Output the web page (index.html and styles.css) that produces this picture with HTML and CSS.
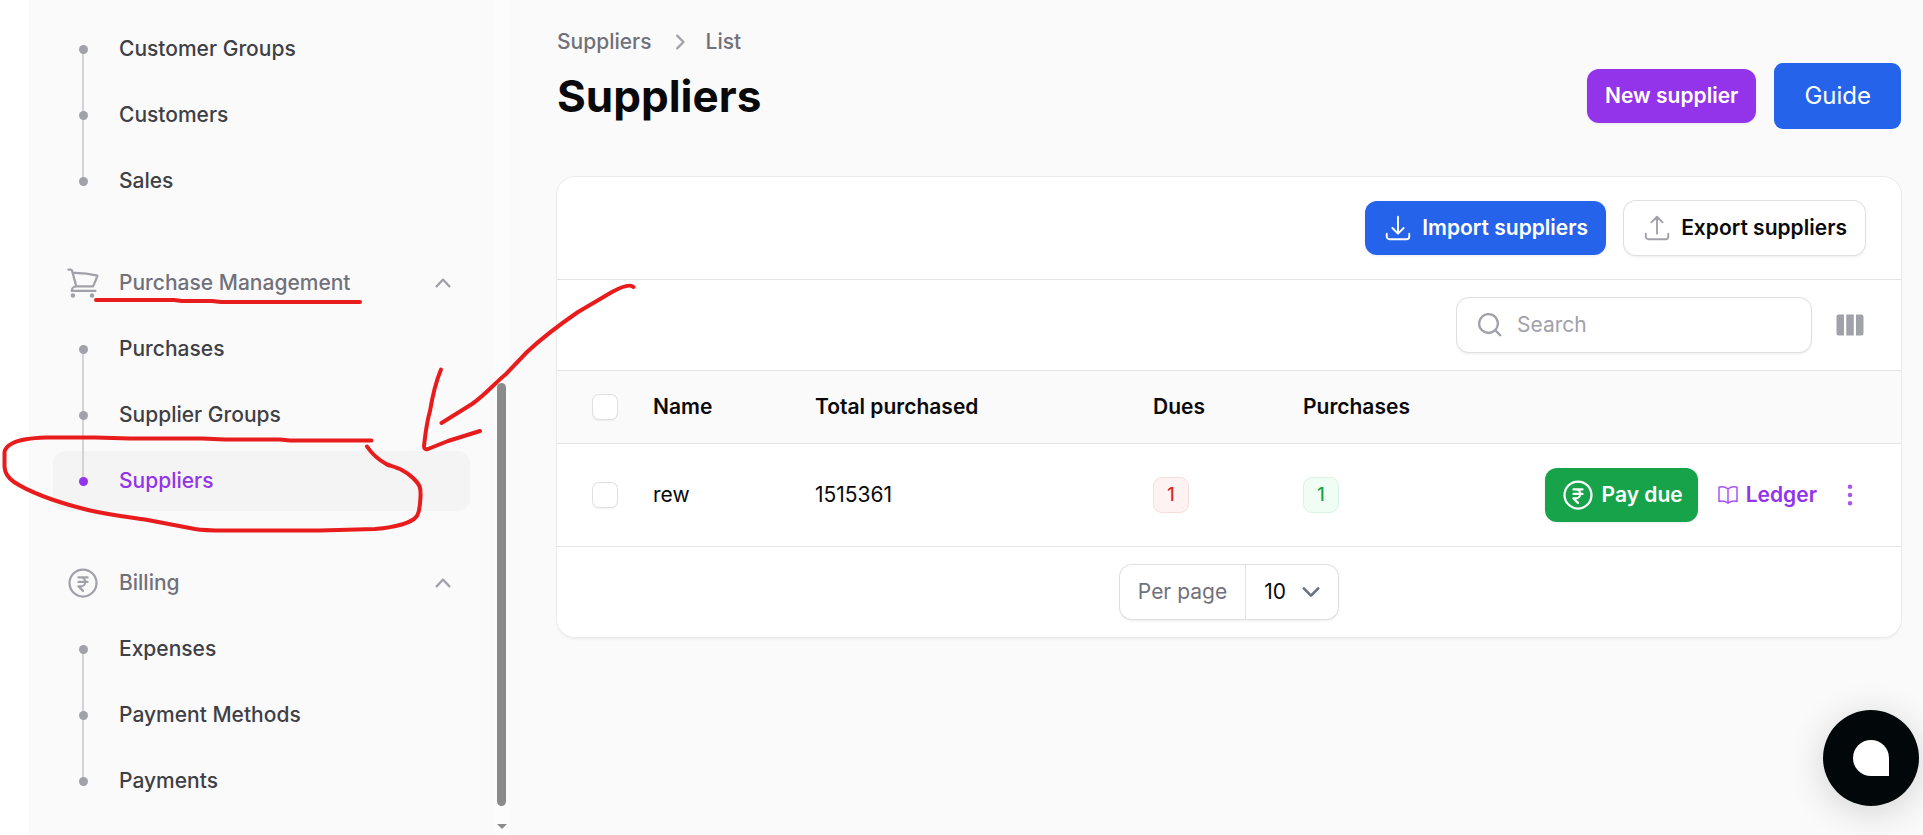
FILE: index.html
```html
<!DOCTYPE html>
<html lang="en">
<head>
<meta charset="utf-8">
<title>Suppliers</title>
<meta name="viewport" content="width=device-width, initial-scale=1">
<link rel="stylesheet" href="styles.css">
</head>
<body>
<svg class="sprite" aria-hidden="true">
  <symbol id="rupee" viewBox="0 0 24 24"><path d="M15 8.25H9m6 3H9m3 6-3-3h1.5a3 3 0 1 0 0-6M21 12a9 9 0 1 1-18 0 9 9 0 0 1 18 0Z"/></symbol>
  <symbol id="chevron-up" viewBox="0 0 20 20"><path d="M14.77 12.79a.75.75 0 0 1-1.06-.02L10 8.832 6.29 12.77a.75.75 0 1 1-1.08-1.04l4.25-4.5a.75.75 0 0 1 1.08 0l4.25 4.5a.75.75 0 0 1-.02 1.06Z"/></symbol>
</svg>

<div class="app">
  <aside class="sidebar">
    <nav class="nav" aria-label="Main">
      <section class="group">
        <ul class="items">
          <li><a class="item" href="#"><span class="marker"></span>Customer Groups</a></li>
          <li><a class="item" href="#"><span class="marker"></span>Customers</a></li>
          <li><a class="item" href="#"><span class="marker"></span>Sales</a></li>
        </ul>
      </section>
      <section class="group">
        <button class="group-head" type="button" aria-expanded="true">
          <svg class="icon-lg line" viewBox="0 0 24 24"><path d="M2.25 3h1.386c.51 0 .955.343 1.087.835l.383 1.437M7.5 14.25a3 3 0 0 0-3 3h15.75m-12.75-3h11.218c1.121-2.3 2.1-4.684 2.924-7.138a60.114 60.114 0 0 0-16.536-1.84M7.5 14.25 5.106 5.272M6 20.25a.75.75 0 1 1-1.5 0 .75.75 0 0 1 1.5 0Zm12.75 0a.75.75 0 1 1-1.5 0 .75.75 0 0 1 1.5 0Z"/></svg>
          <span class="group-label">Purchase Management</span>
          <svg class="icon-md solid"><use href="#chevron-up"/></svg>
        </button>
        <ul class="items">
          <li><a class="item" href="#"><span class="marker"></span>Purchases</a></li>
          <li><a class="item" href="#"><span class="marker"></span>Supplier Groups</a></li>
          <li><a class="item active" href="#" aria-current="page"><span class="marker"></span>Suppliers</a></li>
        </ul>
      </section>
      <section class="group">
        <button class="group-head" type="button" aria-expanded="true">
          <svg class="icon-lg line"><use href="#rupee"/></svg>
          <span class="group-label">Billing</span>
          <svg class="icon-md solid"><use href="#chevron-up"/></svg>
        </button>
        <ul class="items">
          <li><a class="item" href="#"><span class="marker"></span>Expenses</a></li>
          <li><a class="item" href="#"><span class="marker"></span>Payment Methods</a></li>
          <li><a class="item" href="#"><span class="marker"></span>Payments</a></li>
        </ul>
      </section>
    </nav>
    <div class="scrollbar" aria-hidden="true">
      <div class="thumb"></div>
      <div class="scroll-arrow"></div>
    </div>
  </aside>

  <main class="main">
    <header class="page-head">
      <div class="titles">
        <nav class="crumbs" aria-label="Breadcrumb">
          <a href="#">Suppliers</a>
          <svg class="icon-md solid" viewBox="0 0 20 20"><path d="M8.22 5.22a.75.75 0 0 1 1.06 0l4.25 4.25a.75.75 0 0 1 0 1.06l-4.25 4.25a.75.75 0 0 1-1.06-1.06L11.94 10 8.22 6.28a.75.75 0 0 1 0-1.06Z"/></svg>
          <span>List</span>
        </nav>
        <h1>Suppliers</h1>
      </div>
      <div class="page-actions">
        <a class="btn purple" href="#">New supplier</a>
        <a class="guide" href="#">Guide</a>
      </div>
    </header>

    <section class="card">
      <div class="toolbar">
        <button class="btn blue" type="button">
          <svg class="icon-md line" viewBox="0 0 24 24"><path d="M3 16.5v2.25A2.25 2.25 0 0 0 5.25 21h13.5A2.25 2.25 0 0 0 21 18.75V16.5M16.5 12 12 16.5m0 0L7.5 12m4.5 4.5V3"/></svg>
          Import suppliers
        </button>
        <button class="btn outline" type="button">
          <svg class="icon-md line" viewBox="0 0 24 24"><path d="M3 16.5v2.25A2.25 2.25 0 0 0 5.25 21h13.5A2.25 2.25 0 0 0 21 18.75V16.5m-13.5-9L12 3m0 0 4.5 4.5M12 3v13.5"/></svg>
          Export suppliers
        </button>
      </div>
      <div class="filters">
        <label class="search">
          <svg class="icon-md solid" viewBox="0 0 20 20"><path d="M9 3.5a5.5 5.5 0 1 0 0 11 5.5 5.5 0 0 0 0-11ZM2 9a7 7 0 1 1 12.452 4.391l3.328 3.329-1.06 1.06-3.329-3.328A7 7 0 0 1 2 9Z"/></svg>
          <input type="search" placeholder="Search" aria-label="Search">
        </label>
        <button class="icon-btn" type="button" aria-label="Toggle columns">
          <svg class="icon-md solid" viewBox="0 0 20 20"><path d="M14 17h3.5A1.5 1.5 0 0 0 19 15.5v-11A1.5 1.5 0 0 0 17.5 3H14v14ZM12.5 3h-5v14h5V3ZM2.5 3H6v14H2.5A1.5 1.5 0 0 1 1 15.5v-11A1.5 1.5 0 0 1 2.5 3Z"/></svg>
        </button>
      </div>
      <table class="table">
        <colgroup><col class="c-check"><col class="c-name"><col class="c-total"><col class="c-count"><col class="c-count"><col></colgroup>
        <thead>
          <tr>
            <th class="check"><input type="checkbox" aria-label="Select all"></th>
            <th>Name</th><th>Total purchased</th><th>Dues</th><th>Purchases</th><th></th>
          </tr>
        </thead>
        <tbody>
          <tr>
            <td class="check"><input type="checkbox" aria-label="Select rew"></td>
            <td>rew</td>
            <td>1515361</td>
            <td><span class="badge red">1</span></td>
            <td><span class="badge green">1</span></td>
            <td>
              <div class="row-actions">
                <button class="btn pay" type="button"><svg class="icon-lg line"><use href="#rupee"/></svg>Pay due</button>
                <a class="ledger" href="#"><svg class="icon-sm line" viewBox="0 0 24 24"><path d="M12 6.042A8.967 8.967 0 0 0 6 3.75c-1.052 0-2.062.18-3 .512v14.25A8.987 8.987 0 0 1 6 18c2.305 0 4.408.867 6 2.292m0-14.25a8.966 8.966 0 0 1 6-2.292c1.052 0 2.062.18 3 .512v14.25A8.987 8.987 0 0 0 18 18a8.967 8.967 0 0 0-6 2.292m0-14.25v14.25"/></svg>Ledger</a>
                <button class="icon-btn more" type="button" aria-label="More actions"><svg class="icon-md solid" viewBox="0 0 20 20"><path d="M10 3a1.5 1.5 0 1 0 0 3 1.5 1.5 0 0 0 0-3ZM10 8.5a1.5 1.5 0 1 0 0 3 1.5 1.5 0 0 0 0-3ZM11.5 15.5a1.5 1.5 0 1 0-3 0 1.5 1.5 0 0 0 3 0Z"/></svg></button>
              </div>
            </td>
          </tr>
        </tbody>
      </table>
      <div class="pager">
        <div class="per-page">
          <label for="per-page">Per page</label>
          <div class="select">
            <select id="per-page"><option>5</option><option selected>10</option><option>25</option><option>50</option></select>
            <svg class="caret" viewBox="0 0 20 20"><path d="m6 8 4 4 4-4"/></svg>
          </div>
        </div>
      </div>
    </section>
  </main>
</div>

<button class="chat" type="button" aria-label="Open chat"><span></span></button>

<svg class="notes" aria-hidden="true">
  <path d="M96 300H174L182 301H212L221 302H360"/>
  <path d="M371.500 440.500H290L280 439.500H225L202 438.500H130L95 437.500H46C30 438 19 440 13 443C7 446 5 449 4.500 452V467C5 473 8 478 14 482C34 495 64 504 88 510C110 515 128 517 145 519.500L195 529C204 530.500 212 530.500 225 530.500H320L375 529C398 527 412 522 416 517C420 513 420 504 420.500 497C421 487 420 485 413 478C403 469 397 468 387 464.500C377 459 372 454 367 446.500"/>
  <path d="M441.500 423L472 404C485 395 494 384 506 374L527 352C543 337 562 323 578 312L612 292C621 287 630 284 633.500 287"/>
  <path d="M441 369.500C435 384 432 399 430 411C426 425 425 438 424 446Q424 450 428 449L448 441L480 431"/>
</svg>
</body>
</html>
```
FILE: styles.css
```css
* { box-sizing: border-box; }

body {
  margin: 0;
  background: #fff;
  color: #09090b;
  font: 400 21px/30px Inter, "Liberation Sans", sans-serif;
  overflow: hidden;
}

a { color: inherit; text-decoration: none; }
button, input, select { font: inherit; color: inherit; }
button { border: 0; background: none; padding: 0; cursor: pointer; }
ul { list-style: none; margin: 0; padding: 0; }

.sprite { display: none; }
.icon-sm, .icon-md, .icon-lg { display: block; flex: none; }
.icon-sm { width: 24px; height: 24px; }
.icon-md { width: 30px; height: 30px; }
.icon-lg { width: 36px; height: 36px; }
.line { fill: none; stroke: currentColor; stroke-width: 1.5; stroke-linecap: round; stroke-linejoin: round; }
.solid { fill: currentColor; }

.app {
  display: flex;
  min-height: 100vh;
  padding-left: 29px;
}

/* Sidebar */
.sidebar {
  display: flex;
  flex: none;
  background: #fafafa;
}
.nav {
  width: 465px;
  padding: 19px 24px 0;
  display: flex;
  flex-direction: column;
  gap: 42px;
}
.group, .items {
  display: flex;
  flex-direction: column;
  gap: 6px;
}
.item, .group-head {
  display: flex;
  align-items: center;
  gap: 18px;
  width: 100%;
  padding: 12px;
  border-radius: 12px;
  font-weight: 500;
  color: #3f3f46;
}
.group-head { color: #71717a; text-align: left; }
.group-head svg { color: #a1a1aa; }
.group-label { flex: 1; }
.item.active { background: #f4f4f5; color: #9333ea; }

.marker {
  position: relative;
  width: 36px;
  height: 36px;
}
.marker::before, .marker::after {
  content: "";
  position: absolute;
  left: 50%;
}
.marker::before {
  top: -48px;
  height: 66px;
  width: 2px;
  margin-left: -1px;
  background: #d4d4d8;
}
.items li:first-child .marker::before { display: none; }
.marker::after {
  z-index: 1;
  top: 50%;
  width: 9px;
  height: 9px;
  margin: -4px;
  border-radius: 50%;
  background: #a1a1aa;
}
.item.active .marker::after { background: #9333ea; }

.scrollbar {
  width: 15px;
  padding: 383px 3px 6px;
  display: flex;
  flex-direction: column;
  gap: 18px;
  background: #fcfcfc;
}
.thumb { flex: 1; border-radius: 5px; background: #8b8b8b; }
.scroll-arrow {
  border: 5px solid transparent;
  border-top-color: #8b8b8b;
  border-bottom: 0;
  width: 10px;
}

/* Page */
.main {
  flex: 1;
  min-width: 0;
  padding: 27px 22px 48px 48px;
  background: #fafafa;
  display: flex;
  flex-direction: column;
  gap: 48px;
}
.page-head { display: flex; justify-content: space-between; align-items: flex-start; }
.titles { display: flex; flex-direction: column; gap: 12px; }
.crumbs { display: flex; gap: 12px; font-weight: 500; color: #71717a; }
.crumbs svg { color: #a1a1aa; }
h1 { margin: 0; font-size: 44px; line-height: 54px; font-weight: 700; }
.page-actions { display: flex; align-items: center; gap: 18px; padding-top: 36px; }

.btn {
  display: flex;
  align-items: center;
  gap: 9px;
  padding: 12px 18px;
  border-radius: 12px;
  font-weight: 600;
  color: #fff;
  box-shadow: 0 1px 3px rgba(0, 0, 0, .08);
}
.purple { background: #9333ea; }
.blue { background: #2563eb; }
.outline { color: #09090b; background: #fff; box-shadow: 0 0 0 1px #dfdfe1, 0 2px 3px rgba(0, 0, 0, .08); }
.outline svg { color: #a1a1aa; }
.guide {
  padding: 15px 30px;
  border-radius: 9px;
  font-size: 24px;
  line-height: 36px;
  color: #fff;
  background: #2563eb;
}

/* Card */
.card {
  border-radius: 18px;
  background: #fff;
  box-shadow: 0 0 0 1px #ebebec, 0 2px 3px rgba(0, 0, 0, .06);
}
.toolbar { display: flex; justify-content: flex-end; gap: 18px; padding: 24px 36px; }
.filters {
  display: flex;
  justify-content: flex-end;
  align-items: center;
  gap: 24px;
  padding: 18px 36px;
  border-top: 1px solid #e4e4e7;
}
.search {
  display: flex;
  align-items: center;
  gap: 12px;
  width: 354px;
  padding: 12px 18px;
  border-radius: 12px;
  color: #a1a1aa;
  box-shadow: 0 0 0 1px #dfdfe1, 0 2px 3px rgba(0, 0, 0, .08);
}
.search input {
  flex: 1;
  min-width: 0;
  height: 30px;
  padding: 0;
  border: 0;
  outline: 0;
  background: none;
  color: #09090b;
}
.search input::placeholder { color: #a1a1aa; opacity: 1; }
.icon-btn { color: #a1a1aa; }
.more { color: #a855f7; }

.table { width: 100%; border-collapse: collapse; table-layout: fixed; }
.c-check { width: 78px; }
.c-name { width: 162px; }
.c-total { width: 338px; }
.c-count { width: 150px; }
.table tr { border-top: 1px solid #e4e4e7; }
.table thead tr { background: #fafafa; }
.table th, .table td { padding: 0 18px; text-align: left; }
.table th { height: 73px; font-weight: 600; }
.table td { height: 102px; }
.table .check { padding-left: 36px; }
.table td:last-child { padding-right: 36px; }
input[type="checkbox"] {
  appearance: none;
  display: block;
  width: 24px;
  height: 24px;
  margin: 0;
  border-radius: 6px;
  background: #fff;
  box-shadow: 0 0 0 1px #dfdfe1, 0 2px 2px rgba(0, 0, 0, .06);
}

.badge {
  display: block;
  width: 36px;
  border: 1px solid;
  border-radius: 9px;
  padding: 5px 0;
  font-size: 18px;
  line-height: 24px;
  font-weight: 500;
  text-align: center;
}
.red { color: #dc2626; background: #fef2f2; border-color: #fadcdc; }
.green { color: #16a34a; background: #f0fdf4; border-color: #d8f3e1; }

.row-actions { display: flex; justify-content: flex-end; align-items: center; gap: 18px; }
.pay { gap: 6px; padding: 9px 15px; background: #16a34a; }
.ledger { display: flex; align-items: center; gap: 6px; font-weight: 600; color: #9333ea; }
.ledger svg { color: #a855f7; }

.pager { display: flex; justify-content: center; padding: 18px 36px; border-top: 1px solid #e4e4e7; }
.per-page {
  display: flex;
  border-radius: 12px;
  box-shadow: 0 0 0 1px #dfdfe1, 0 2px 3px rgba(0, 0, 0, .08);
}
.per-page label { padding: 12px 18px; color: #71717a; border-right: 1px solid #e4e4e7; }
.select { position: relative; display: flex; }
.select select {
  appearance: none;
  width: 92px;
  padding: 12px 18px;
  border: 0;
  background: none;
}
.caret {
  position: absolute;
  right: 9px;
  top: 9px;
  width: 36px;
  height: 36px;
  fill: none;
  stroke: #6b7280;
  stroke-width: 1.5;
  stroke-linecap: round;
  stroke-linejoin: round;
  pointer-events: none;
}

.chat {
  position: fixed;
  right: 4px;
  bottom: 29px;
  width: 96px;
  height: 96px;
  display: grid;
  place-items: center;
  border-radius: 50%;
  background: #020809;
  box-shadow: 0 6px 36px rgba(0, 0, 0, .16);
}
.chat span { width: 36px; height: 36px; border-radius: 50% 50% 0 50%; background: #fff; }

.notes {
  position: absolute;
  left: 0;
  top: 0;
  width: 660px;
  height: 560px;
  pointer-events: none;
  fill: none;
  stroke: #e81c1c;
  stroke-width: 4;
  stroke-linecap: round;
  stroke-linejoin: round;
}
```
